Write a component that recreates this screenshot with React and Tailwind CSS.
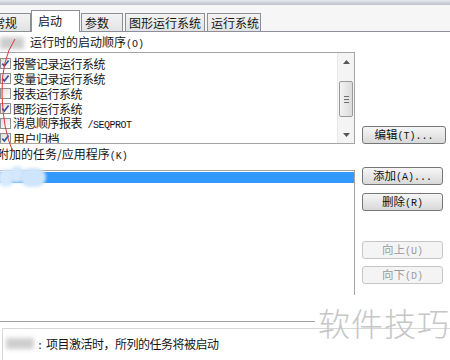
import React from "react";

function Mono({ children }) {
  return <span className="font-['Liberation_Mono',monospace] text-[10px]">{children}</span>;
}

function CheckBox({ on }) {
  return (
    <span className="w-[11px] h-[11px] shrink-0 border border-[#8e8f8f] bg-linear-to-br from-[#dedede] to-white flex items-center justify-center">
      {on && (
        <svg width="9" height="9" viewBox="0 0 9 9">
          <path d="M1.3 4.6 L3.4 7 L7.6 1.4" stroke="#2f56a0" strokeWidth="1.7" fill="none" />
        </svg>
      )}
    </span>
  );
}

function Button({ children, disabled, className = "" }) {
  return (
    <div
      className={`h-[18px] flex items-center justify-center rounded-[3px] border text-[11.5px] ${
        disabled
          ? "border-[#c4c6c8] bg-[#f4f4f4] text-[#9b9b9b]"
          : "border-[#767676] bg-linear-to-b from-[#f6f6f6] to-[#d9d9d9] text-[#111]"
      } ${className}`}
    >
      <span>{children}</span>
    </div>
  );
}

function Tab({ label, active, className = "" }) {
  return (
    <div
      className={`flex items-center border border-b-0 border-[#8c8f96] ${
        active ? "h-[22px] -mb-px bg-white z-10 pb-[2px]" : "h-[18px] bg-linear-to-b from-[#f3f3f3] to-[#e3e3e3]"
      } ${className}`}
    >
      {label}
    </div>
  );
}

const items = [
  { on: true, label: "报警记录运行系统" },
  { on: true, label: "变量记录运行系统" },
  { on: false, label: "报表运行系统" },
  { on: true, label: "图形运行系统" },
  { on: false, label: "消息顺序报表", extra: " /SEQPROT" },
  { on: true, label: "用户归档" },
];

export default function App() {
  return (
    <div className="relative w-[450px] h-[360px] overflow-hidden bg-white text-[#151515] font-['Noto_Sans_CJK_SC',sans-serif] text-[12px] leading-none">
      <div className="h-[5px] bg-linear-to-b from-[#e6e9ed] to-[#bcc1c8]" />

      {/* tabs */}
      <div className="h-[27px] flex items-end bg-[#f6f6f6] border-b border-[#8c8f96]">
        <Tab label="常规" className="-ml-[12px] w-[43px] pl-[4px]" />
        <Tab label="启动" active className="w-[49px] pl-[6px]" />
        <Tab label="参数" className="ml-px w-[42px] pl-[3px]" />
        <Tab label="图形运行系统" className="ml-[2px] w-[80px] pl-[3px]" />
        <Tab label="运行系统" className="ml-[2px] w-[54px] pl-[3px]" />
      </div>

      <div className="flex flex-col">
        <div className="h-[14px] mt-[4px] pl-[30px] flex items-center">
          <span>
            运行时的启动顺序<Mono>(O)</Mono>
          </span>
        </div>

        <div className="mt-[2px] flex items-end">
          <div className="-ml-[3px] w-[358px] h-[92px] border border-[#a5a5a5] flex overflow-hidden">
            <div className="flex-1 pt-[3px] pl-[2px] flex flex-col tracking-[-0.5px]">
              {items.map((it) => (
                <div key={it.label} className="h-[15px] shrink-0 flex items-center gap-[2px] leading-[15px]">
                  <CheckBox on={it.on} />
                  <span>
                    {it.label}
                    {it.extra && <Mono>{it.extra}</Mono>}
                  </span>
                </div>
              ))}
            </div>
            <div className="w-[17px] bg-[#f4f4f4] border-l border-[#e8e8e8] flex flex-col items-center">
              <div className="h-[17px] flex items-center justify-center">
                <svg width="7" height="4" viewBox="0 0 7 4">
                  <path d="M0 4 L3.5 0 L7 4 Z" fill="#555" />
                </svg>
              </div>
              <div className="mt-[11px] w-[14px] h-[36px] rounded-[2px] border border-[#9a9a9a] bg-linear-to-r from-[#f2f2f2] to-[#dcdcdc] flex flex-col items-center justify-center gap-[2px]">
                <div className="w-[5px] h-px bg-[#707070]" />
                <div className="w-[5px] h-px bg-[#707070]" />
                <div className="w-[5px] h-px bg-[#707070]" />
              </div>
              <div className="mt-auto h-[17px] flex items-center justify-center">
                <svg width="7" height="4" viewBox="0 0 7 4">
                  <path d="M0 0 L3.5 4 L7 0 Z" fill="#555" />
                </svg>
              </div>
            </div>
          </div>
          <Button className="ml-[7px] w-[84px]">
            编辑<Mono>(T)...</Mono>
          </Button>
        </div>

        <div className="h-[14px] mt-[4px] -ml-[3px] flex items-center">
          <span>
            附加的任务/应用程序<Mono>(K)</Mono>
          </span>
        </div>

        <div className="mt-[5px] flex items-start">
          <div className="-ml-[3px] mt-[3px] w-[358px] h-[125px] border-t border-r border-[#a5a5a5] pt-px">
            <div className="h-[11px] bg-[#3399ff]" />
          </div>
          <div className="ml-[7px] w-[81px] flex flex-col">
            <Button className="h-[17px]">
              添加<Mono>(A)...</Mono>
            </Button>
            <Button className="mt-[8px] h-[17px]">
              删除<Mono>(R)</Mono>
            </Button>
            <Button disabled className="mt-[30px] h-[17px]">
              向上<Mono>(U)</Mono>
            </Button>
            <Button disabled className="mt-[7px] h-[17px]">
              向下<Mono>(D)</Mono>
            </Button>
          </div>
        </div>

        <div className="mt-[26px] w-[315px] h-px bg-[#a0a0a0]" />

        <div className="mt-[6px] ml-[2px] h-[40px] border border-b-0 border-r-0 border-[#d8d8d8] pt-[9px] pl-[34px]">
          <span>
            <Mono>:</Mono>
            <span className="ml-[3px] tracking-[-0.5px]">项目激活时，所列的任务将被启动</span>
          </span>
        </div>
      </div>

      {/* blurred patches */}
      <div className="absolute left-0 top-[37px] w-[24px] h-[12px] bg-[#cdcdcd] blur-[2px]" />
      <div className="absolute left-[-2px] top-[169px] w-[16px] h-[18px] rounded-full bg-[#d6eafc] blur-[1.5px]" />
      <div className="absolute left-[10px] top-[166px] w-[14px] h-[17px] rounded-full bg-[#d3e8fb] blur-[1.5px]" />
      <div className="absolute left-[20px] top-[168px] w-[26px] h-[19px] rounded-full bg-[#cfe5fb] blur-[1.5px]" />
      <div className="absolute left-[6px] top-[338px] w-[28px] h-[11px] bg-[#cfcfcf] blur-[2px]" />

      {/* red annotation */}
      <svg className="absolute left-0 top-[30px]" width="26" height="130" viewBox="0 0 26 130">
        <path d="M15 9 Q1 30 2 65 Q3 100 13 122" stroke="#e0353a" strokeWidth="1" fill="none" />
      </svg>

      {/* watermark */}
      <div className="absolute left-[318px] top-[306px] text-[32px] font-light tracking-[1px] text-[#c6c6c6]">
        软件技巧
      </div>
    </div>
  );
}
